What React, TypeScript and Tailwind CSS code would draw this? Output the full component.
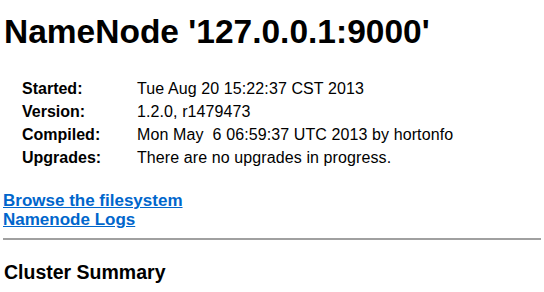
export default function App() {
  const rows: [string, string][] = [
    ["Started:", "Tue Aug 20 15:22:37 CST 2013"],
    ["Version:", "1.2.0, r1479473"],
    ["Compiled:", "Mon May\u00a0\u00a06 06:59:37 UTC 2013 by hortonfo"],
    ["Upgrades:", "There are no upgrades in progress."],
  ];
  return (
    <div
      className="w-[544px] h-[292px] bg-white text-black overflow-hidden px-[3px]"
      style={{ fontFamily: '"Liberation Sans", Arial, sans-serif' }}
    >
      <h1 className="text-[33.5px] font-bold leading-[37px] mt-[13px] pl-[1px]">
        NameNode '127.0.0.1:9000'
      </h1>
      <div className="mt-[27px] pl-[19px] flex flex-col">
        {rows.map(([k, v]) => (
          <div key={k} className="flex text-[16px] leading-[23px]">
            <div className="w-[115px] font-bold shrink-0">{k}</div>
            <div className="whitespace-pre tracking-[0.1px]">{v}</div>
          </div>
        ))}
      </div>
      <div className="mt-[22px] flex flex-col text-[17px] font-bold leading-[19px]">
        <a href="#" className="text-[#0066cc] underline self-start">
          Browse the filesystem
        </a>
        <a href="#" className="text-[#0066cc] underline self-start">
          Namenode Logs
        </a>
      </div>
      <div className="mt-[9px] h-[2px] bg-[#a0a0a0]" />
      <h2 className="mt-[21px] text-[19.5px] font-bold leading-[22px] pl-[1px]">
        Cluster Summary
      </h2>
    </div>
  );
}
